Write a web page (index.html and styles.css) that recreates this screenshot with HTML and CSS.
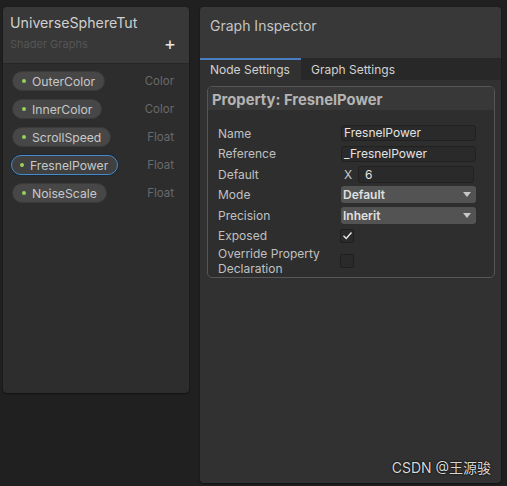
FILE: index.html
```html
<!DOCTYPE html>
<html>
<head>
<meta charset="utf-8">
<link rel="stylesheet" href="styles.css">
</head>
<body>
<div class="app">
  <div class="blackboard">
    <div class="bb-header">
      <div class="bb-title">UniverseSphereTut</div>
      <div class="bb-sub">
        <span class="bb-subtitle">Shader Graphs</span>
        <span class="bb-add">+</span>
      </div>
    </div>
    <div class="bb-list">
      <div class="prop"><span class="pill"><span class="dot"></span>OuterColor</span><span class="type">Color</span></div>
      <div class="prop"><span class="pill"><span class="dot"></span>InnerColor</span><span class="type">Color</span></div>
      <div class="prop"><span class="pill"><span class="dot"></span>ScrollSpeed</span><span class="type">Float</span></div>
      <div class="prop"><span class="pill selected"><span class="dot"></span>FresnelPower</span><span class="type">Float</span></div>
      <div class="prop"><span class="pill"><span class="dot"></span>NoiseScale</span><span class="type">Float</span></div>
    </div>
  </div>
  <div class="inspector">
    <div class="insp-header">Graph Inspector</div>
    <div class="tabs">
      <div class="tab active">Node Settings</div>
      <div class="tab">Graph Settings</div>
    </div>
    <div class="propbox">
      <div class="propbox-title">Property: FresnelPower</div>
      <div class="rows">
        <div class="row"><span class="label">Name</span><span class="field text">FresnelPower</span></div>
        <div class="row"><span class="label">Reference</span><span class="field text">_FresnelPower</span></div>
        <div class="row"><span class="label">Default</span><span class="vec"><span class="axis">X</span><span class="field text num">6</span></span></div>
        <div class="row"><span class="label">Mode</span><span class="field drop">Default<span class="arrow"></span></span></div>
        <div class="row"><span class="label">Precision</span><span class="field drop">Inherit<span class="arrow"></span></span></div>
        <div class="row"><span class="label">Exposed</span><span class="check">
          <svg width="11" height="11" viewBox="0 0 11 11"><path d="M1.5 5.8 L4.2 8.4 L9.5 2.5" fill="none" stroke="#e8e8e8" stroke-width="1.4"/></svg>
        </span></div>
        <div class="row tall"><span class="label">Override Property<br>Declaration</span><span class="check"></span></div>
      </div>
    </div>
    <div class="spacer"></div>
    <div class="watermark">CSDN @王源骏</div>
  </div>
</div>
</body>
</html>
```
FILE: styles.css
```css
* { box-sizing: border-box; }
html, body { margin: 0; padding: 0; }
body {
  background: #202020;
  font-family: Inter, "Noto Sans", "Noto Sans CJK SC", sans-serif;
  color: #c4c4c4;
  width: 507px;
  height: 486px;
  overflow: hidden;
}
.app {
  display: flex;
  align-items: flex-start;
  padding: 7px 0 0 3px;
  gap: 11px;
}
.blackboard {
  width: 186px;
  height: 386px;
  background: #2d2d2d;
  border-radius: 4px;
  box-shadow: 0 1px 2px rgba(0,0,0,0.5);
  overflow: hidden;
}
.bb-header {
  height: 57px;
  background: #383838;
  padding: 7px 10px 0 7px;
  border-bottom: 1px solid #262626;
}
.bb-title {
  font-size: 14.2px;
  line-height: 18px;
  color: #cfcfcf;
}
.bb-sub {
  display: flex;
  justify-content: space-between;
  align-items: center;
  margin-top: 3px;
}
.bb-subtitle {
  font-size: 11px;
  color: #555555;
}
.bb-add {
  font-size: 18px;
  line-height: 18px;
  color: #e8e8e8;
  margin-right: 3px;
}
.bb-list {
  display: flex;
  flex-direction: column;
  gap: 8px;
  padding: 7px 15px 0 9px;
}
.prop {
  display: flex;
  justify-content: space-between;
  align-items: center;
  height: 20px;
}
.pill {
  display: inline-flex;
  align-items: center;
  height: 20px;
  padding: 0 9px 0 9px;
  background: #474747;
  border-radius: 10px;
  font-size: 12.2px;
  color: #c8c8c8;
  border: 1px solid #3a3a3a;
}
.pill.selected {
  border: 1px solid #4a8ac4;
  box-shadow: 0 0 0 1px #1d2a36;
  background: #404040;
  padding-left: 8px;
  margin-left: -1px;
}
.dot {
  width: 4px;
  height: 4px;
  border-radius: 2px;
  background: #95d15b;
  margin-right: 6px;
}
.type {
  font-size: 11.5px;
  color: #6a6a6a;
}
.inspector {
  width: 301px;
  height: 476px;
  background: #313131;
  border-radius: 4px;
  display: flex;
  flex-direction: column;
  overflow: hidden;
  box-shadow: 0 1px 2px rgba(0,0,0,0.5);
}
.insp-header {
  height: 51px;
  background: #383838;
  padding: 10px 10px 0 10px;
  font-size: 14px;
  line-height: 18px;
  color: #c4c4c4;
}
.tabs {
  display: flex;
  height: 22px;
  background: #282828;
}
.tab {
  font-size: 12px;
  line-height: 20px;
  color: #d2d2d2;
  padding: 0 10px;
  border-top: 2px solid transparent;
}
.tab.active {
  width: 101px;
  background: #313131;
  border-top: 2px solid #4a7ec0;
}
.propbox {
  margin: 6px 6px 0 7px;
  height: 192px;
  border: 1px solid #565656;
  border-radius: 5px;
  background: #2e2e2e;
  overflow: hidden;
}
.propbox-title {
  height: 23px;
  background: #383838;
  font-size: 14.8px;
  font-weight: 700;
  line-height: 27px;
  padding-left: 4px;
  color: #b4b4b4;
}
.rows {
  display: flex;
  flex-direction: column;
  gap: 0.5px;
  padding: 13px 18px 0 10px;
}
.row {
  display: grid;
  grid-template-columns: 123px 1fr;
  align-items: center;
  height: 20px;
}
.row.tall {
  height: 31px;
  margin-top: -1px;
}
.label {
  font-size: 12px;
  line-height: 15px;
  color: #c0c0c0;
}
.field {
  height: 16px;
  border-radius: 3px;
  font-size: 12px;
  line-height: 16px;
  padding: 0 2px;
  color: #e4e4e4;
}
.field.text {
  background: #2a2a2a;
  border: 1px solid #212121;
  line-height: 14px;
}
.vec {
  display: flex;
  align-items: center;
}
.axis {
  width: 17px;
  padding-left: 3px;
  font-size: 12px;
  color: #c8c8c8;
}
.field.num {
  flex: 1;
  height: 17px;
  margin-right: 2px;
  padding-left: 6px;
  line-height: 15px;
}
.field.drop {
  height: 17px;
  background: #535353;
  font-weight: 600;
  line-height: 17px;
  display: flex;
  justify-content: space-between;
  align-items: center;
  color: #e0e0e0;
  padding-right: 5px;
}
.arrow {
  width: 0;
  height: 0;
  border-left: 4px solid transparent;
  border-right: 4px solid transparent;
  border-top: 5px solid #c8c8c8;
}
.check {
  width: 14px;
  height: 14px;
  margin-left: -1px;
  background: #2a2a2a;
  border: 1px solid #1f1f1f;
  border-radius: 2px;
  display: flex;
  align-items: center;
  justify-content: center;
}
.spacer { flex: 1; }
.watermark {
  align-self: flex-end;
  margin: 0 10px 6px 0;
  font-size: 14px;
  color: #d8d8d8;
  text-shadow: 0 0 1px #000, 0 0 2px #000;
}
```
